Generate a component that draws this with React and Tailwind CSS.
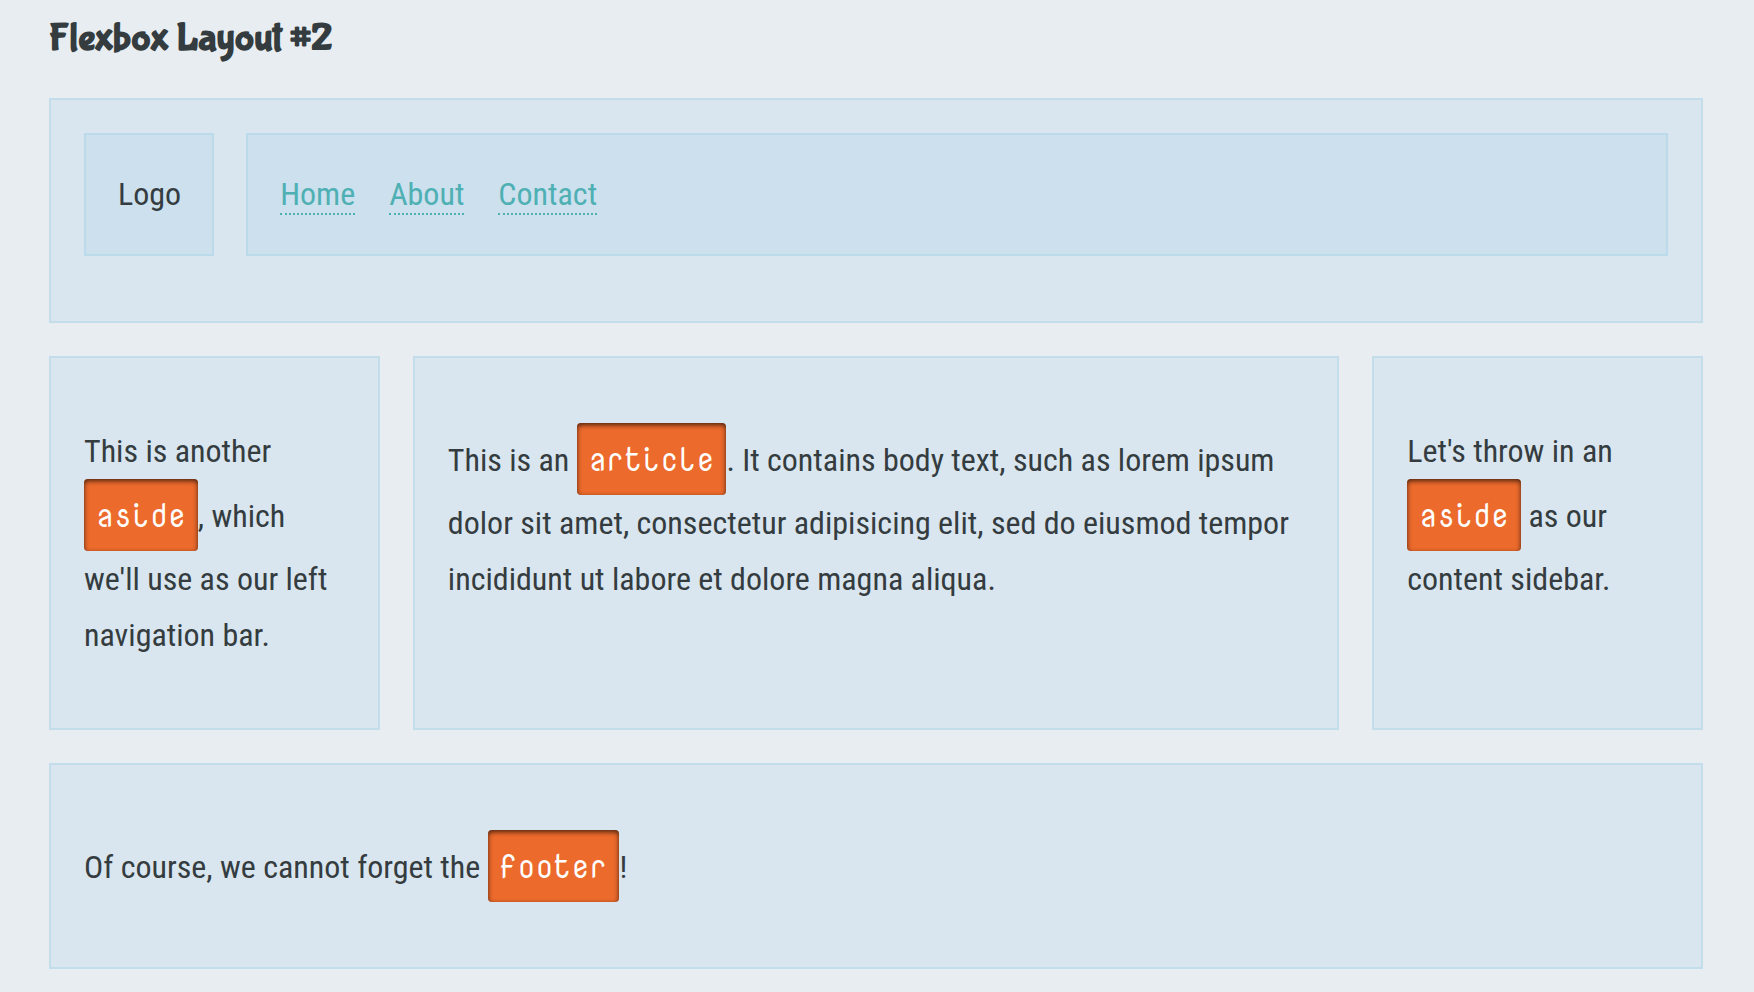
const panel = "border-2 border-[#c3deea] bg-[#d9e6ef]";
const inner = "border-2 border-[#bbdaea] bg-[#cce0ee]";

function Tag({ children }) {
  return (
    <code className="inline-block rounded bg-[#ec6a2c] px-3 py-2 font-['NovaMono','DejaVu_Sans_Mono',monospace] text-[32px] leading-[56px] text-white shadow-[inset_0_2px_5px_#000000b0]">
      {children}
    </code>
  );
}

function NavLink({ href, children }) {
  return (
    <a href={href} className="border-b-2 border-dotted border-[#4fb0b4] text-[#4fb0b4]">
      {children}
    </a>
  );
}

export default function App() {
  return (
    <div className="min-h-screen bg-[#e8edf1] pt-3 pr-[51px] pb-6 pl-[49px] font-['Roboto_Condensed','Liberation_Sans_Narrow',sans-serif] text-[32px] leading-[56px] text-[#343c40]">
      <h1 className="mb-[34px] font-['Bubblegum_Sans','Roboto_Condensed',sans-serif] text-[40px] leading-[52px] font-bold">Flexbox Layout #2</h1>
      <div className="flex flex-col gap-[33px]">
        <header className={`flex gap-8 px-[33px] pt-[33px] pb-[65px] ${panel}`}>
          <div className={`pr-[31px] pl-8 pt-[31px] pb-8 ${inner}`}>Logo</div>
          <nav className={`flex-1 px-8 pt-[31px] pb-8 ${inner}`}>
            <ul className="flex gap-[34px]">
              <li><NavLink href="#home">Home</NavLink></li>
              <li><NavLink href="#about">About</NavLink></li>
              <li><NavLink href="#contact">Contact</NavLink></li>
            </ul>
          </nav>
        </header>
        <main className="grid grid-cols-[20%_1fr_20%] gap-[33px]">
          <aside className={`px-[33px] py-[65px] ${panel}`}>
            <p>This is another <Tag>aside</Tag>, which we'll use as our left navigation bar.</p>
          </aside>
          <article className={`px-[33px] py-[65px] ${panel}`}>
            <p>
              This is an <Tag>article</Tag>. It contains body text, such as lorem ipsum dolor sit amet,
              consectetur adipisicing elit, sed do eiusmod tempor incididunt ut labore et dolore magna aliqua.
            </p>
          </article>
          <aside className={`px-[33px] py-[65px] ${panel}`}>
            <p>Let's throw in an <Tag>aside</Tag> as our content sidebar.</p>
          </aside>
        </main>
        <footer className={`px-[33px] py-[65px] ${panel}`}>
          <p>Of course, we cannot forget the <Tag>footer</Tag>!</p>
        </footer>
      </div>
    </div>
  );
}
